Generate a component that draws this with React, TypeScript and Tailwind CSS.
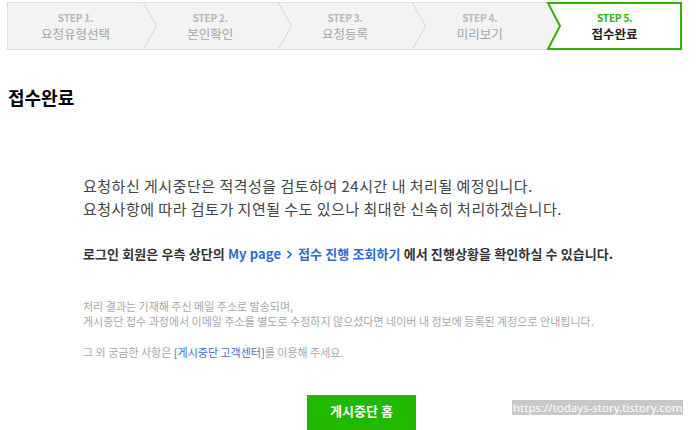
import React from 'react'
import { ChevronRight } from 'lucide-react'

const steps = [
  { no: 'STEP 1.', label: '요청유형선택' },
  { no: 'STEP 2.', label: '본인확인' },
  { no: 'STEP 3.', label: '요청등록' },
  { no: 'STEP 4.', label: '미리보기' },
  { no: 'STEP 5.', label: '접수완료' },
]

const StepBar = () => {
  return (
    <div className="ml-[7px] mt-[2px] w-[675px] h-[48px] flex bg-[#f3f3f3] border-y border-l border-[#dedede]">
      {steps.map((step, i) => {
        const active = i === steps.length - 1
        return (
          <div key={step.no} className="relative flex-1 flex flex-col items-center justify-center">
            {active && (
              <svg className="absolute left-0 top-[-1px] overflow-visible" width="135" height="48" viewBox="0 0 135 48">
                <polygon points="1,1 134,1 134,47 1,47 13,24" fill="#fff" stroke="#2cb400" strokeWidth="2" />
              </svg>
            )}
            {!active && i < steps.length - 2 && (
              <svg className="absolute right-[-14px] top-0 z-10" width="14" height="46" viewBox="0 0 14 46">
                <polyline points="0.5,0 13.5,23 0.5,46" fill="none" stroke="#d4d4d4" strokeWidth="1" />
              </svg>
            )}
            <span
              className={`relative text-[10px] font-semibold leading-[15px] tracking-[-0.2px] ${active ? 'text-[#2cb400] font-bold' : 'text-[#b9b9b9]'}`}
            >
              {step.no}
            </span>
            <span
              className={`relative text-[12.5px] leading-[17px] ${active ? 'text-[#222] font-bold' : 'text-[#a5a5a5]'}`}
            >
              {step.label}
            </span>
          </div>
        )
      })}
    </div>
  )
}

const App = () => {
  return (
    <div className="relative w-[700px] h-[430px] overflow-hidden bg-white font-['Noto_Sans_CJK_KR',sans-serif]">
      <StepBar />

      <h2 className="mt-[35px] ml-[8px] text-[18px] leading-[24px] font-bold text-black">
        접수완료
      </h2>

      <div className="pl-[83px]">
        <p className="mt-[65px] text-[15px] leading-[23px] text-[#444] tracking-[0.5px]">
          요청하신 게시중단은 적격성을 검토하여 24시간 내 처리될 예정입니다.
          <br />
          요청사항에 따라 검토가 지연될 수도 있으나 최대한 신속히 처리하겠습니다.
        </p>

        <p className="mt-[24px] text-[13px] leading-[20px] font-bold text-[#333] tracking-[0.1px]">
          로그인 회원은 우측 상단의{' '}
          <span className="text-[#2a6dd0]">
            My page
            <ChevronRight className="inline-block w-[13px] h-[13px] mx-[2px] mb-[2px]" strokeWidth={3} />
            접수 진행 조회하기
          </span>{' '}
          에서 진행상황을 확인하실 수 있습니다.
        </p>

        <p className="mt-[35px] text-[11px] leading-[15px] text-[#a8a8a8]">
          처리 결과는 기재해 주신 메일 주소로 발송되며,
          <br />
          게시중단 접수 과정에서 이메일 주소를 별도로 수정하지 않으셨다면 네이버 내 정보에 등록된 계정으로 안내됩니다.
        </p>

        <p className="mt-[16px] text-[11px] leading-[15px] text-[#a8a8a8]">
          그 외 궁금한 사항은 <span className="text-[#3d6fc6]">[게시중단 고객센터]</span>를 이용해 주세요.
        </p>
      </div>

      <div className="mt-[35px] flex justify-center pl-[23px]">
        <button className="w-[109px] h-[36px] bg-[#21b900] text-white text-[13px] font-bold pb-[4px]">
          게시중단 홈
        </button>
      </div>

      <div className="absolute left-[512px] top-[400px] bg-[#c8c8c8] px-[1px] text-[11.5px] leading-[15px] text-white font-['Noto_Sans',sans-serif]">
        https://todays-story.tistory.com
      </div>
    </div>
  )
}

export default App
